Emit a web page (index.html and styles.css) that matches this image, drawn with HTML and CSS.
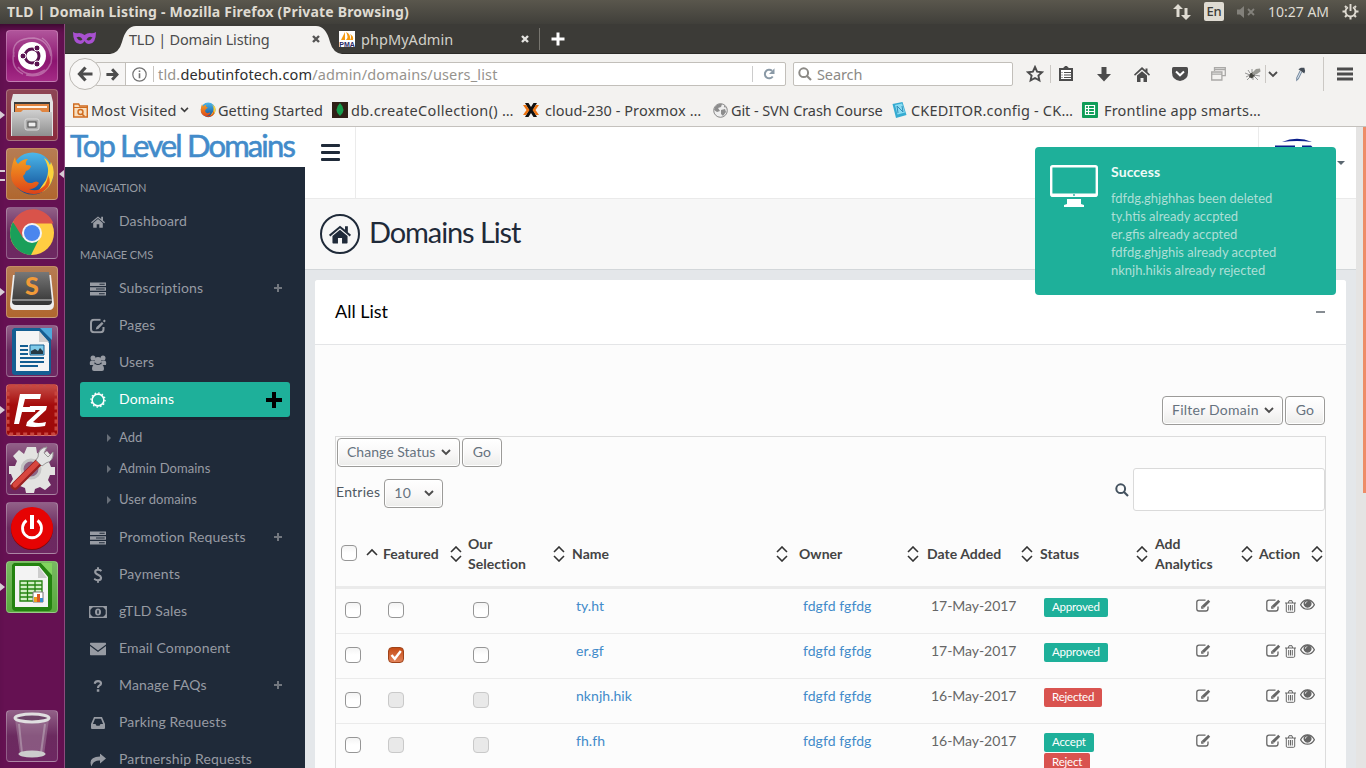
FILE: index.html
```html
<!DOCTYPE html>
<html lang="en">
<head>
<meta charset="utf-8">
<title>TLD | Domain Listing</title>
<link rel="stylesheet" href="styles.css">
</head>
<body>
<svg class="defs" width="0" height="0">
  <defs>
    <linearGradient id="g-steel" x1="0" y1="0" x2="0" y2="1"><stop offset="0" stop-color="#d0d0d0"/><stop offset="1" stop-color="#8f8f8f"/></linearGradient>
    <linearGradient id="g-orange" x1="0" y1="0" x2="0" y2="1"><stop offset="0" stop-color="#f4a021"/><stop offset="1" stop-color="#dd4318"/></linearGradient>
    <linearGradient id="g-blue" x1="0" y1="0" x2="0" y2="1"><stop offset="0" stop-color="#4db8ea"/><stop offset="1" stop-color="#0e4a94"/></linearGradient>
    <linearGradient id="g-key" x1="0" y1="0" x2="0" y2="1"><stop offset="0" stop-color="#777"/><stop offset="1" stop-color="#333"/></linearGradient>
    <symbol id="i-home" viewBox="0 0 14 12"><path d="M7 .4 0 6.200l.8 1L7 2.100l6.200 5.100.8-1-2-1.700V.8H10.200v2.100z"/><path d="M7 3 2.200 7v4.300q0 .5.500.5H5.700V8.300h2.600v3.500h3q.5 0 .5-.5V7z"/></symbol>
    <symbol id="i-server" viewBox="0 0 16 14"><path fill-rule="evenodd" d="M0 .5h16V4H0zM9.500 1.700v1h5.200v-1zM0 5.200h16v3.600H0zM6 6.500v1h8.700v-1zM0 10h16v3.600H0zM9 11.300v1h5.700v-1z"/></symbol>
    <symbol id="i-edit" viewBox="0 0 15 13"><path d="M9.500 1.100H3Q.8 1.100.8 3.300v6.500Q.8 12 3 12h6.800q2.200 0 2.200-2.200V7.600" fill="none" stroke="currentColor" stroke-width="1.300"/><path d="M12.300.8l1.900 1.900-7 7H5.100V7.500z"/><path d="M6.300 7.600 7.500 8.800" stroke="#fff" stroke-width=".6"/></symbol>
    <symbol id="i-editb" viewBox="0 0 16 15"><path d="M10.500 1.300H4Q1 1.300 1 4.300v6.500q0 3 3 3h6.500q3 0 3-3V8.500" fill="none" stroke="currentColor" stroke-width="2"/><path d="M11.900 3.500l1.600 1.500-5.200 5.400-2.600.7.800-2.600zM12.800 2.500 14.500.9l1.300 1.500-1.500 1.500z"/></symbol>
    <symbol id="i-trash" viewBox="0 0 11 13"><path d="M0 3h11M3.400 3 4 .7h3L7.600 3M1.300 3v8.200q0 1.100 1 1.100h6.400q1 0 1-1.100V3M3.700 5v5.500M5.500 5v5.500M7.300 5v5.500" fill="none" stroke="currentColor"/></symbol>
    <symbol id="i-eye" viewBox="0 0 15 11"><path d="M.6 5.700Q3 .8 7.500.8t6.900 4.900Q12 10.200 7.500 10.200T.6 5.700z" fill="none" stroke="currentColor" stroke-width="1.300"/><path fill-rule="evenodd" d="M7.500.8a4 4 0 1 0 .1 0zM7.300 2.200v.9Q5.700 3.200 5.600 4.800H4.800Q5 2.400 7.300 2.200z"/></symbol>
    <symbol id="i-sort" viewBox="0 0 12 16"><path d="M1 6l5-5 5 5M1 10l5 5 5-5" fill="none" stroke="currentColor" stroke-width="1.600"/></symbol>
    <symbol id="i-asc" viewBox="0 0 12 16"><path d="M1 9l5-5 5 5" fill="none" stroke="currentColor" stroke-width="1.600"/></symbol>
    <symbol id="i-chev" viewBox="0 0 10 7"><path d="M1 1l4 4 4-4" fill="none" stroke="currentColor" stroke-width="1.900"/></symbol>
    <symbol id="i-search" viewBox="0 0 14 14"><circle cx="5.700" cy="5.700" r="4.400" fill="none" stroke="currentColor" stroke-width="2"/><path d="M9 9l4 4" stroke="currentColor" stroke-width="2.200"/></symbol>
    <symbol id="i-fox" viewBox="0 0 46 46"><circle cx="23.500" cy="22.500" r="21" fill="url(#g-blue)"/><path d="M35 7q7 11 2 22l-9 13q9-1 13-8 7-12 1-23l-1 3q-2-5-6-7z" fill="#fbd33c"/><path d="M6 6q0 4 3 7 4-5 10-5-3 3-2 6 4 0 5 1-1 4-5 5-1 4-3 5 2 8 9 7 5-3 7 0-3 6-10 6 9 4 16-4 3-6 3-10 5 9-3 15-7 6-18 3Q1 36 2 22 3 12 6 6z" fill="url(#g-orange)"/></symbol>
  </defs>
</svg>

<header class="panel">
  <span class="panel-title">TLD | Domain Listing - Mozilla Firefox (Private Browsing)</span>
  <div class="tray">
    <svg width="18" height="16" viewBox="0 0 18 16"><path d="M5 0l5 5H6.500v8h-3V5H0zM13 16l5-5h-3.500V4h-3v7H8z" fill="#dfdbd2"/></svg>
    <span class="lang">En</span>
    <svg class="mute" width="18" height="12" viewBox="0 0 18 12"><path d="M0 3.500h3L7 0v12L3 8.500H0z" fill="#83817b"/><path d="M11 3l6 6M17 3l-6 6" stroke="#83817b" stroke-width="1.800"/></svg>
    <span class="clock">10:27 AM</span>
    <svg width="17" height="17" viewBox="0 0 17 17" fill="none" stroke="#dfdbd2"><path d="M6 4.200a5 5 0 1 0 5 0" fill="none" stroke-width="1.900"/><path d="M8.500 1v7" stroke-width="1.900"/><path d="M4.500 4.500 3 3M12.500 4.500 14 3M3.500 8.500H.5M13.500 8.500h3M5 12 3 14M12 12l2 2M8.500 13.500v3" stroke-width="2"/></svg>
  </div>
</header>

<div class="desktop">
  <nav class="launcher">
    <div class="tile t-dash"><svg viewBox="0 0 52 52"><path d="M8 27Q4 8 28 8q14 2 17 18M17 44Q4 38 8 22M20 45q18 4 25-12Q48 16 36 8M12 37q11 13 27 3" fill="none" stroke="#fff" stroke-opacity=".3" stroke-width="1.500"/><circle cx="26" cy="26" r="14" fill="#fff"/><circle cx="26" cy="26" r="7" fill="none" stroke="#5a1250" stroke-width="3"/><circle cx="17" cy="26" r="3" fill="#5a1250" stroke="#fff"/><circle cx="31" cy="18" r="3" fill="#5a1250" stroke="#fff"/><circle cx="31" cy="34" r="3" fill="#5a1250" stroke="#fff"/></svg></div>
    <div class="tile t-red run"><svg viewBox="0 0 52 52"><path d="M7 5h38l2 8v34H5V13z" fill="#e3e3e3"/><path d="M8 13h36v14H8z" fill="#3c3c3c"/><path d="M9 15h34v13H9z" fill="#e08540"/><path d="M11 17h30v2H11z" fill="#fff2e5"/><path d="M6 23h9l2-2h17l2 2h10v24H6z" fill="url(#g-steel)"/><rect x="19" y="30" width="14" height="11" rx="2" fill="#aaa" stroke="#ddd"/><rect x="22" y="33" width="8" height="5" fill="#eee" stroke="#444"/></svg></div>
    <div class="tile t-orange run multi focus"><svg viewBox="0 0 52 52"><use href="#i-fox" x="3" y="3" width="46" height="46"/></svg></div>
    <div class="tile t-clear"><svg viewBox="0 0 52 52"><circle cx="26" cy="26" r="22" fill="#ffcd42"/><path d="M7 15a22 22 0 0 0 18 33l9-18-14-1z" fill="#1a9f5a"/><path d="M7 15 17 31l9-14.500h21.500A22 22 0 0 0 7 15z" fill="#d9534a"/><circle cx="26" cy="26" r="10" fill="#f4f4f4"/><circle cx="26" cy="26" r="8" fill="#4a86ee"/></svg></div>
    <div class="tile t-orange run"><svg viewBox="0 0 52 52"><path d="M7 9 4 38q0 6 5 6h34q5 0 5-6L45 9z" fill="#eee"/><path d="M9 6h34l3 29q0 4-4 4H10q-4 0-4-4z" fill="url(#g-key)"/><path d="M6 33h40v2H6z" fill="#888"/><text x="26" y="29" class="sub">S</text></svg></div>
    <div class="tile t-clear"><svg viewBox="0 0 52 52"><path d="M8 3h27l10 11v33q0 3-3 3H9q-3 0-3-3V5z" fill="#145e92"/><path d="M34 3h12v12z" fill="#4fa9db"/><path d="M10 6h23l10 12v28H10z" fill="#f5f5f5"/><path d="M33 6v11h10z" fill="#cfcfcf"/><path d="M14 21h8M14 25h8M14 29h8M14 33h24M14 37h24M14 41h18" stroke="#145e92" stroke-width="1.800"/><path d="M24 20h14v10H24z" fill="#81cbe9" stroke="#145e92"/><path d="M25 29v-3l4-2 3 2 2-3 3 3v3z" fill="#263944"/></svg></div>
    <div class="tile t-fz run"><svg viewBox="0 0 52 52"><rect x="2" y="2" width="48" height="48" rx="3" fill="none" stroke="#c8453f" stroke-width="3" stroke-dasharray="4 3"/><path d="M14 10h21l-1 5H19l-2 8h13l-1 5H16l-3 12H8zM24 22h17l-1 4-13 12q5 2 13 0l-1 4q-11 2-19 0l1-4 13-12h-11z" fill="#fff"/></svg></div>
    <div class="tile t-clear"><svg viewBox="0 0 52 52"><path d="M21 4h9l1 6 5 2 5-4 5 6-3 5 2 5h4v8h-5l-2 5 3 5-6 5-5-3-5 2-1 4h-8l-1-5-5-2-5 3-5-5 3-5-2-5H3v-8h6l2-5-4-5 6-6 5 4z" fill="#e3e3e1"/><circle cx="25" cy="26" r="9" fill="#8b6585" stroke="#c4c4c4" stroke-width="3"/><path d="M9 43 33 19" stroke="#982020" stroke-width="8" stroke-linecap="round"/><path d="m9 42 23-23" stroke="#d8473f" stroke-width="5" stroke-linecap="round"/><path d="M32 14q0-9 9-10l-3 6 4 4 5-5q1 9-7 11l-4 3-6-6z" fill="#e4e4e4" stroke="#999"/></svg></div>
    <div class="tile t-clear"><svg viewBox="0 0 52 52"><circle cx="26" cy="27" r="21" fill="#850707"/><circle cx="26" cy="26" r="21" fill="#e60303"/><path d="M20.500 18.500a9.500 9.500 0 1 0 11 0" fill="none" stroke="#fff" stroke-width="2.800"/><path d="M26 13v14" stroke="#fff" stroke-width="4"/></svg></div>
    <div class="tile t-green run"><svg viewBox="0 0 52 52"><path d="M8 2h27l11 12v32q0 4-4 4H10q-4 0-4-4V4z" fill="#23820f"/><path d="M35 2h11v12z" fill="#82d45f"/><path d="M9 5h24l9 11v30H9z" fill="#f3f3f3"/><path d="M32 5v12h9z" fill="#ccc"/><path d="M14 20h22v20H14zM14 24h22M14 28h22M14 32h22M14 36h22M21.500 20v20M29 20v20" fill="#d2f0c5" stroke="#23820f" stroke-width="1.300"/><path d="M27 31h10v10H27z" fill="#fff" stroke="#777"/><path d="M28 36h3v5h-3z" fill="#eaa320"/><path d="M31 33h3v8h-3z" fill="#dc5726"/><path d="M34 37h3v4h-3z" fill="#388ece"/></svg></div>
    <div class="tile t-clear bin"><svg viewBox="0 0 52 52"><path d="M9 9h34l-5 36q-12 4-24 0z" fill="#b59cb0" fill-opacity=".4"/><path d="M13 14l3 29M39 14l-4 29" stroke="#ddd" stroke-opacity=".35" stroke-width="2"/><ellipse cx="26" cy="44" rx="13.500" ry="3.500" fill="#ccc"/><ellipse cx="26" cy="8" rx="17" ry="4" fill="#6d4468" stroke="#e0dfe0" stroke-width="3"/></svg></div>
  </nav>

  <main class="browser">
    <div class="tabstrip">
      <svg class="mask" width="23" height="15" viewBox="0 0 23 15"><path fill-rule="evenodd" d="M0 1q3 2 6 1 3 0 5.500 2Q14 2 17 2q3 1 6-1 0 12-7 12-3 0-4.500-3Q10 13 7 13 0 13 0 1zM3.500 6.500q3 4.500 6 2-2-4-6-2zM19.500 6.500q-3 4.500-6 2 2-4 6-2z" fill="#a850d0"/></svg>
      <div class="tab">
        <svg class="tab-shape" width="232" height="28" viewBox="0 0 232 28"><path d="M0 28Q9 27 12 16 16 0 26 0H206q10 0 14 16 3 11 12 12z" fill="#f3f2f0"/></svg>
        <span class="tab-text">TLD | Domain Listing</span>
        <svg class="x" width="8" height="8" viewBox="0 0 8 8"><path d="M1 1l6 6M7 1 1 7" stroke="#555" stroke-width="2.400"/></svg>
      </div>
      <svg class="pma" width="16" height="16" viewBox="0 0 16 16"><path d="M0 0h16v16H0z" fill="#fff"/><path d="M2 9 6 1v8zM7 9q3-3 0-8 5 2 4 8zM11 9q2-3 0-6 4 2 3 6z" fill="#f49a10"/><text x="8" y="15.800" class="pma-t">PMA</text></svg>
      <span class="tab-text dim">phpMyAdmin</span>
      <svg class="x2" width="8" height="8" viewBox="0 0 8 8"><path d="M1 1l6 6M7 1 1 7" stroke="#e4e3df" stroke-width="2.400"/></svg>
      <i class="tab-sep"></i>
      <svg class="plus" width="14" height="14" viewBox="0 0 14 14"><path d="M7 .5v13M.5 7h13" stroke="#fff" stroke-width="3"/></svg>
    </div>

    <div class="navbar">
      <div class="back"><svg width="16" height="16" viewBox="0 0 16 16"><path d="M8.500 1.500 2.500 8l6 6.500M3 8h12.500" fill="none" stroke="#4c4c4c" stroke-width="3.200"/></svg></div>
      <div class="urlbar">
        <div class="fwd"><svg width="13" height="13" viewBox="0 0 16 16"><path d="M7.500 1.500l6 6.500-6 6.500M13 8H.5" fill="none" stroke="#4c4c4c" stroke-width="3.600"/></svg></div>
        <svg class="info" width="15" height="15" viewBox="0 0 15 15"><circle cx="7.500" cy="7.500" r="6.700" fill="none" stroke="#737373" stroke-width="1.200"/><path d="M7.500 6.300v5M7.500 3.500v1.600" stroke="#737373" stroke-width="1.600"/></svg>
        <i class="usep"></i>
        <span class="url">tld.<b>debutinfotech.com</b>/admin/domains/users_list</span>
        <div class="reload"><svg width="12" height="12" viewBox="0 0 12 12"><path d="M9 2.800A4.300 4.300 0 1 0 9.700 8.500" fill="none" stroke="#8a99a6" stroke-width="2"/><path d="M11.500.3V6H6z" fill="#8a99a6"/></svg></div>
      </div>
      <div class="searchbar"><svg width="14" height="14"><use href="#i-search"/></svg><span>Search</span></div>
      <div class="tools">
        <svg style="left:13px" width="18" height="18" viewBox="0 0 18 18"><path d="M9 2l2.100 4.600 5 .6-3.700 3.300 1 4.900L9 13l-4.400 2.400 1-4.900L1.900 7.200l5-.6z" fill="none" stroke="#4c4c4c" stroke-width="1.900"/></svg>
        <i style="left:37px"></i>
        <svg style="left:46px" width="14" height="16" viewBox="0 0 14 16"><path d="M1 3h12v11H1z" fill="#fff" stroke="#4c4c4c" stroke-width="2"/><path d="M4 3 7 0l3 3zM5 6.500h7M5 9h7M5 11.500h7" fill="#4c4c4c" stroke="#4c4c4c" stroke-width="1.200"/><path d="M2.500 6.500h1M2.500 9h1M2.500 11.500h1" stroke="#4c4c4c"/></svg>
        <svg style="left:84px" width="14" height="15" viewBox="0 0 14 15"><path d="M4.500 0h5v7H14l-7 7.500L0 7h4.500z" fill="#4c4c4c"/></svg>
        <svg style="left:121px" width="16" height="15" viewBox="0 0 16 15"><path d="M8 0 0 7.500l1 1.200L8 2.600l7 6.100 1-1.200-2.500-2.400V1.500h-2v1.800zM3 8.500l5-4.300 5 4.300V15H9.500v-4h-3v4H3z" fill="#4c4c4c"/></svg>
        <svg style="left:159px" width="16" height="14" viewBox="0 0 16 14"><path d="M1.500 0h13Q16 0 16 1.500v4Q16 13 8 14 0 13 0 5.500v-4Q0 0 1.500 0z" fill="#4c4c4c"/><path d="M4 4.500 8 8.300l4-3.800" fill="none" stroke="#fff" stroke-width="2"/></svg>
        <svg style="left:198px" width="15" height="14" viewBox="0 0 15 14"><path d="M3.500 4V.7h10.800v8H11M.7 5h10.200v8H.7zM.7 7.200h10.200M3.500 2.500h10.500" fill="none" stroke="#aaa9a7" stroke-width="1.300"/></svg>
        <svg style="left:232px" width="16" height="13" viewBox="0 0 16 13"><path d="M4 9 5 5.500 8 4l2 3-3 3.500z" fill="#45453f"/><path d="M7 5 11 1l4-.5.500 3L12 6 8 7z" fill="#9a9a94"/><path d="M0 5l5 2-4 2M5 9l-3 3M8 9v3M9 8l4 4M9 7l6 1M5 5 3 2M7 4 7 1" stroke="#555" stroke-width=".6" fill="none"/></svg>
        <i style="left:252px"></i>
        <svg style="left:255px" width="10" height="7"><use href="#i-chev"/></svg>
        <svg style="left:282px" width="11" height="16" viewBox="0 0 13 17"><path d="M8 6 4 14l-2 2v-3l4-8" fill="#dde8f2" stroke="#788ba0" stroke-width="1.200"/><path d="M4 3l7 5 1-3-1-4-4 0z" fill="#444d57"/></svg>
        <i class="tall" style="left:310px"></i>
        <svg style="left:324px" width="16" height="14" viewBox="0 0 16 14"><path d="M0 2h16M0 7h16M0 12h16" stroke="#4c4c4c" stroke-width="2.800"/></svg>
      </div>
    </div>

    <div class="bookmarks">
      <svg style="left:8px" width="15" height="15" viewBox="0 0 15 15"><path d="M.7 1h5l1 2h7.600v11H.7z" fill="#f8dfbf" stroke="#cf6b1f" stroke-width="1.400"/><path d="M1 4.500h13" stroke="#cf6b1f"/><circle cx="7.500" cy="9" r="2.500" fill="none" stroke="#cf6b1f" stroke-width="1.400"/><path d="m9 11 2.500 2.500" stroke="#cf6b1f" stroke-width="1.600"/></svg>
      <span class="wide" style="left:26px">Most Visited</span>
      <svg style="left:115px" width="9" height="6"><use href="#i-chev"/></svg>
      <svg style="left:135px" width="16" height="16"><use href="#i-fox"/></svg>
      <span class="mid" style="left:153px">Getting Started</span>
      <svg style="left:267px" width="16" height="16" viewBox="0 0 16 16"><path d="M0 0h16v16H0z" fill="#301f16"/><path d="M8 1q7 7 0 13Q1 8 8 1z" fill="#169b4b"/></svg>
      <span class="wider" style="left:286px">db.createCollection() …</span>
      <svg style="left:458px" width="16" height="14" viewBox="0 0 16 14"><path d="M2 0h3.500L8 4l2.500-4H14l-4 7 4 7h-3.500L8 10l-2.500 4H2l4-7z" fill="#111"/><path d="M0 2h3l3.500 5L3 12H0l3.500-5zM16 2h-3L9.500 7l3.500 5h3l-3.500-5z" fill="#ee7411"/></svg>
      <span class="wide" style="left:480px"><span class="tight">cloud-230 - </span>Proxmox …</span>
      <svg style="left:648px" width="15" height="15" viewBox="0 0 15 15"><circle cx="7.500" cy="7.500" r="6.800" fill="#eee" stroke="#888"/><path d="M2 4q3-4 7-3L8 4 5 5l2 3-3 1-3-2zM8 7l4-1 1 3-3 4-2-2zM11 2l2 3-2-1z" fill="#8d8d8d"/></svg>
      <span style="left:666px">Git - SVN Crash Course</span>
      <svg style="left:827px" width="15" height="16" viewBox="0 0 15 16"><path d="M.5 2 10.500 0l4 13-10.500 3z" fill="#35abd1"/><path d="M3 3l7-1.500 3 9-7.500 2z" fill="#8bdcf2"/><path d="M6 11 5 4l6 6-1-6" stroke="#338eb9" fill="none"/></svg>
      <span class="wide" style="left:846px">CKEDITOR.config - CK…</span>
      <svg style="left:1017px" width="16" height="16" viewBox="0 0 16 16"><rect width="16" height="16" rx="1" fill="#0f9d58"/><path d="M3.500 3.500h9v9h-9zM3.500 6.500h9M3.500 9.500h9M6.500 3.500v9" fill="none" stroke="#fff" stroke-width="1.200"/></svg>
      <span class="wide" style="left:1039px">Frontline app smarts…</span>
    </div>

    <div class="page">
      <aside class="sidebar">
        <div class="brand"><span>Top Level Domains</span></div>
        <div class="menu">
          <h6 class="cap">NAVIGATION</h6>
          <a class="item"><svg width="14" height="12"><use href="#i-home"/></svg><span>Dashboard</span></a>
          <h6 class="cap">MANAGE CMS</h6>
          <a class="item"><svg width="16" height="14"><use href="#i-server"/></svg><span>Subscriptions</span><em></em></a>
          <a class="item"><svg width="16" height="15"><use href="#i-editb"/></svg><span>Pages</span></a>
          <a class="item"><svg width="18" height="16" viewBox="0 0 18 16"><circle cx="4" cy="3" r="2.500"/><circle cx="14" cy="3" r="2.500"/><path d="M1 10q-1-4.500 2-4.500l3 .5q-1 3 0 4zM17 10q1-4.500-2-4.500l-3 .5q1 3 0 4z"/><circle cx="9" cy="5.500" r="3.400"/><path d="M6 9q3 2 6 0 3 1 3 5 0 2-2 2H5q-2 0-2-2 0-4 3-5z"/></svg><span>Users</span></a>
          <a class="item active"><svg width="16" height="16" viewBox="0 0 16 16"><circle cx="8" cy="8" r="5.900" fill="none" stroke="currentColor" stroke-width="1.600"/><circle cx="8" cy="8" r="7.100" fill="none" stroke="currentColor" stroke-width="1.200" stroke-dasharray="1.500 2.217"/></svg><span>Domains</span><em></em></a>
          <div class="subs">
            <a>Add</a><a>Admin Domains</a><a>User domains</a>
          </div>
          <a class="item"><svg width="16" height="14"><use href="#i-server"/></svg><span>Promotion Requests</span><em></em></a>
          <a class="item"><svg width="9" height="16" viewBox="0 0 9 16"><path d="M8 4Q6.500 2.800 4.500 2.800 1.700 2.800 1.700 5q0 1.600 2.800 2.700T7.600 10.700q0 2.500-3.100 2.500-2.200 0-3.900-1.500M4.500.3V3M4.500 13v2.700" fill="none" stroke="currentColor" stroke-width="2.100"/></svg><span>Payments</span></a>
          <a class="item"><svg width="18" height="12" viewBox="0 0 18 12"><path d="M.7.7h16.600v10.600H.7z" fill="none" stroke="currentColor" stroke-width="1.300"/><path d="M1 1h3L1 4zM17 1h-3l3 3zM1 11V8l3 3zM17 11V8l-3 3z"/><path fill-rule="evenodd" d="M9 2.500q3 0 3 3.500T9 9.500 6 6t3-3.500zm-.8 1.700v3.600h1.600V4.200z"/></svg><span>gTLD Sales</span></a>
          <a class="item"><svg width="16" height="13" viewBox="0 0 16 13"><path d="M1 0h14q1 0 1 1v1L8 8 0 2V1q0-1 1-1zM0 3.500 8 9.500l8-6V12q0 1-1 1H1q-1 0-1-1z"/></svg><span>Email Component</span></a>
          <a class="item"><svg width="9" height="12" viewBox="0 0 9 12"><path d="M1 3.700Q1.800 1.100 4.500 1.100 7.500 1.100 7.500 3.500q0 1.200-1.700 2.100Q4.500 6.300 4.500 8" fill="none" stroke="currentColor" stroke-width="2.200"/><path d="M3.300 9.300h2.500v2.400H3.300z"/></svg><span>Manage FAQs</span><em></em></a>
          <a class="item"><svg width="14" height="12" viewBox="0 0 14 12"><path fill-rule="evenodd" d="M3 0h8l3 7v4q0 1-1 1H1q-1 0-1-1V7zM4 1.700 1.900 7h2.600l1 1.700h3l1-1.700h2.600L10 1.700z"/></svg><span>Parking Requests</span></a>
          <a class="item"><svg width="16" height="13" viewBox="0 0 16 13"><path d="M10 0l6 5-6 5V7Q3 6.500 1.500 13-2.500 3.500 10 3z"/></svg><span>Partnership Requests</span></a>
        </div>
      </aside>

      <section class="content">
        <div class="topbar">
          <div class="burger"><i></i><i></i><i></i></div>
          <div class="user"><svg class="avatar" width="60" height="30" viewBox="0 0 60 30"><path d="M13 5q15-6.500 30 0-15-2-30 0z" fill="#0b1f8b"/><path d="M6 8.500h20v3H6zM33 8.500h9l3 3H33z" fill="#0b1f8b"/></svg><i class="caret"></i></div>
        </div>
        <div class="heading">
          <div class="ring"><svg width="22" height="19"><use href="#i-home"/></svg></div>
          <h1>Domains List</h1>
        </div>
        <div class="card">
          <div class="card-head"><h2>All List</h2><i></i></div>
          <div class="card-body">
            <div class="filter"><button class="btn sel">Filter Domain <svg width="10" height="7"><use href="#i-chev"/></svg></button><button class="btn go">Go</button></div>
            <div class="box">
              <div class="bulk"><button class="btn sel">Change Status <svg width="10" height="7"><use href="#i-chev"/></svg></button><button class="btn go">Go</button></div>
              <div class="tabletools">
                <div class="entries"><span>Entries</span> <button class="btn sel num">10 <svg width="10" height="7"><use href="#i-chev"/></svg></button></div>
                <div class="find"><svg width="14" height="14"><use href="#i-search"/></svg><span class="field"></span></div>
              </div>
              <div class="row head">
                <div class="c1"><span class="cb"></span><svg class="sort"><use href="#i-asc"/></svg></div>
                <div class="c2">Featured<svg class="sort"><use href="#i-sort"/></svg></div>
                <div class="c3">Our<br>Selection<svg class="sort"><use href="#i-sort"/></svg></div>
                <div class="c4">Name<svg class="sort"><use href="#i-sort"/></svg></div>
                <div class="c5">Owner<svg class="sort"><use href="#i-sort"/></svg></div>
                <div class="c6">Date Added<svg class="sort"><use href="#i-sort"/></svg></div>
                <div class="c7">Status<svg class="sort"><use href="#i-sort"/></svg></div>
                <div class="c8">Add<br>Analytics<svg class="sort"><use href="#i-sort"/></svg></div>
                <div class="c9">Action<svg class="sort"><use href="#i-sort"/></svg></div>
              </div>
              <div class="row">
                <div class="c1"><span class="cb"></span></div><div class="c2"><span class="cb"></span></div><div class="c3"><span class="cb"></span></div>
                <div class="c4"><a>ty.ht</a></div><div class="c5"><a>fdgfd fgfdg</a></div><div class="c6">17-May-2017</div>
                <div class="c7"><span class="label ok">Approved</span></div>
                <div class="c8"><svg width="15" height="13"><use href="#i-edit"/></svg></div>
                <div class="c9"><svg width="15" height="13"><use href="#i-edit"/></svg><svg class="tr" width="11" height="13"><use href="#i-trash"/></svg><svg width="15" height="11"><use href="#i-eye"/></svg></div>
              </div>
              <div class="row">
                <div class="c1"><span class="cb"></span></div><div class="c2"><span class="cb on"><svg width="14" height="14" viewBox="0 0 14 14"><path d="M2.500 7l3.300 3.800L11.800 3" fill="none" stroke="#fff" stroke-width="2.400"/></svg></span></div><div class="c3"><span class="cb"></span></div>
                <div class="c4"><a>er.gf</a></div><div class="c5"><a>fdgfd fgfdg</a></div><div class="c6">17-May-2017</div>
                <div class="c7"><span class="label ok">Approved</span></div>
                <div class="c8"><svg width="15" height="13"><use href="#i-edit"/></svg></div>
                <div class="c9"><svg width="15" height="13"><use href="#i-edit"/></svg><svg class="tr" width="11" height="13"><use href="#i-trash"/></svg><svg width="15" height="11"><use href="#i-eye"/></svg></div>
              </div>
              <div class="row">
                <div class="c1"><span class="cb"></span></div><div class="c2"><span class="cb off"></span></div><div class="c3"><span class="cb off"></span></div>
                <div class="c4"><a>nknjh.hik</a></div><div class="c5"><a>fdgfd fgfdg</a></div><div class="c6">16-May-2017</div>
                <div class="c7"><span class="label no">Rejected</span></div>
                <div class="c8"><svg width="15" height="13"><use href="#i-edit"/></svg></div>
                <div class="c9"><svg width="15" height="13"><use href="#i-edit"/></svg><svg class="tr" width="11" height="13"><use href="#i-trash"/></svg><svg width="15" height="11"><use href="#i-eye"/></svg></div>
              </div>
              <div class="row">
                <div class="c1"><span class="cb"></span></div><div class="c2"><span class="cb off"></span></div><div class="c3"><span class="cb off"></span></div>
                <div class="c4"><a>fh.fh</a></div><div class="c5"><a>fdgfd fgfdg</a></div><div class="c6">16-May-2017</div>
                <div class="c7"><span class="label ok">Accept</span><span class="label no">Reject</span></div>
                <div class="c8"><svg width="15" height="13"><use href="#i-edit"/></svg></div>
                <div class="c9"><svg width="15" height="13"><use href="#i-edit"/></svg><svg class="tr" width="11" height="13"><use href="#i-trash"/></svg><svg width="15" height="11"><use href="#i-eye"/></svg></div>
              </div>
            </div>
          </div>
        </div>
      </section>
      <div class="scroll"><i></i></div>
      <div class="toast">
        <svg width="48" height="42" viewBox="0 0 48 42"><rect x="1.200" y="1.200" width="45.600" height="29.600" rx="1.500" fill="none" stroke="#fff" stroke-width="2.400"/><path d="M1 28.500h46v3H1zM17 34h14v5l3 1v2H14v-2l3-1z" fill="#fff"/><circle cx="24" cy="30" r=".9" fill="#1eb09a"/></svg>
        <div><strong>Success</strong><p>fdfdg.ghjghhas been deleted<br>ty.htis already accpted<br>er.gfis already accpted<br>fdfdg.ghjghis already accpted<br>nknjh.hikis already rejected</p></div>
      </div>
    </div>
  </main>
</div>
</body>
</html>
```
FILE: styles.css
```css
* { box-sizing: border-box; }
body { margin: 0; width: 1366px; height: 768px; overflow: hidden; display: flex; flex-direction: column; font-family: Lato, sans-serif; font-size: 14px; color: #5b6770; }
h1, h2, h6, p { margin: 0; font-weight: 400; }
svg { display: block; flex: none; fill: currentColor; }
.defs { position: absolute; }

.panel { height: 24px; flex: none; display: flex; align-items: center; padding: 0 7px 1px; background: linear-gradient(#5a574d, #403f3a); font-family: "Noto Sans", sans-serif; color: #dfdbd2; }
.panel svg { fill: none; }
.panel-title { font-size: 14px; font-weight: 700; letter-spacing: .19px; white-space: nowrap; }
.tray { margin-left: auto; display: flex; align-items: center; }
.lang { margin-left: 13px; width: 20px; height: 19px; line-height: 19px; border-radius: 2px; background: #dfdbd2; color: #3d3c37; font-size: 13px; font-weight: 500; text-align: center; letter-spacing: -.3px; }
.mute { margin-left: 13px; }
.clock { margin-left: 13px; width: 62px; font-size: 14px; letter-spacing: 0; white-space: nowrap; margin-right: 12px; }

.desktop { flex: 1; min-height: 0; display: flex; }
.launcher { width: 65px; flex: none; display: flex; flex-direction: column; gap: 7px; padding: 6px 0 6px 6px; background: #651152; border-right: 1px solid #8d4a7e; box-shadow: inset 0 8px 8px -6px #2d0724; }
.tile { position: relative; width: 52px; height: 52px; flex: none; border-radius: 4px; border: 1px solid rgba(255,255,255,.25); }
.tile svg { width: 52px; height: 52px; margin: -1px; }
.t-dash { background: linear-gradient(#b0559b, #8c1470 60%, #a52b86); }
.t-red { background: linear-gradient(#8d4655, #8a2c3d); }
.t-orange { background: linear-gradient(#b67c53, #b0672f); }
.t-clear { background: linear-gradient(#916087, #6b2a5f 50%, #6e2862); }
.t-fz { background: linear-gradient(#c54d47, #a50c0c 40%, #9b0909); }
.t-green { background: linear-gradient(#78ba61, #58a83d); }
.bin { margin-top: auto; }
.run::before { content: ""; position: absolute; left: -7px; top: 21px; border: 4px solid transparent; border-left: 5px solid #d8cdd5; border-right: 0; }
.multi::before { top: 21px; width: 5px; height: 7px; border: solid #d8cdd5; border-width: 2px 0; }
.focus::after { content: ""; position: absolute; right: -7px; top: 21px; border: 4px solid transparent; border-right: 5px solid #d8cdd5; border-left: 0; }
.sub { font: 900 25px Lato, sans-serif; fill: #f19a38; text-anchor: middle; }

.browser { flex: 1; min-width: 0; display: flex; flex-direction: column; background: #f3f2f0; }
.tabstrip { height: 30px; flex: none; display: flex; align-items: center; background: #3c3b37; border-bottom: 1px solid #2c2b28; padding: 2px 0 0 8px; font-family: "Noto Sans", sans-serif; }
.mask { margin-top: -2px; }
.tab { position: relative; display: flex; align-items: center; width: 232px; height: 28px; margin-left: 14px; padding: 0 22px 2px 19px; }
.tab-shape { position: absolute; left: 0; top: 0; }
.tab-text { position: relative; font-size: 14.500px; color: #4c4c4c; white-space: nowrap; letter-spacing: -.2px; }
.dim { color: #d2d0c9; margin: -2px 0 0 6px; width: 160px; letter-spacing: .05px; }
.x { position: relative; margin-left: auto; }
.x2, .plus { margin-top: -2px; }
.pma { margin: -2px 0 0 -3px; }
.pma-t { font: 700 7px "Liberation Sans", sans-serif; fill: #2a2a66; text-anchor: middle; }
.tab-sep { width: 1px; height: 22px; background: #77756f; margin: -2px 11px 0 10px; }

.navbar { height: 40px; flex: none; display: flex; align-items: center; padding-left: 4px; font-family: "Noto Sans", sans-serif; font-size: 14.500px; }
.back { position: relative; z-index: 1; width: 32px; height: 32px; border: 1px solid #bbb8b3; border-radius: 50%; background: #f8f7f6; display: grid; place-items: center; }
.urlbar { margin-left: -6px; width: 691px; height: 24px; border: 1px solid #c2bfba; border-radius: 2px; background: #fff; display: flex; align-items: center; }
.fwd { width: 30px; height: 22px; background: #f6f5f4; border-right: 1px solid #c2bfba; display: grid; place-items: center; padding-left: 4px; }
.info { margin-left: 6px; }
.usep { width: 1px; height: 16px; background: #c7c4bf; margin: 0 4px 0 6px; }
.url { color: #96938e; white-space: nowrap; letter-spacing: .15px; }
.url b { font-weight: 400; color: #2e2e2e; }
.reload { margin-left: auto; width: 33px; height: 16px; border-left: 1px solid #ccc; display: grid; place-items: center; }
.searchbar { margin-left: 7px; width: 220px; height: 24px; border: 1px solid #c2bfba; border-radius: 2px; background: #fff; display: flex; align-items: center; gap: 5px; padding-left: 4px; color: #8c8a86; letter-spacing: -.1px; }
.tools { position: relative; flex: 1; height: 40px; color: #4c4c4c; }
.tools svg, .tools i { position: absolute; top: 0; bottom: 0; margin: auto 0; }
.tools i { width: 1px; height: 18px; background: #cbc8c4; }
.tools i.tall { height: 34px; }

.bookmarks { position: relative; height: 33px; flex: none; border-bottom: 1px solid #c4c1bd; font-family: "Noto Sans", sans-serif; font-size: 14.500px; letter-spacing: -.1px; color: #3f3f3f; }
.bookmarks > * { position: absolute; top: 0; bottom: 0; margin: auto 0; }
.bookmarks span { line-height: 33px; white-space: nowrap; }
.bookmarks .mid { letter-spacing: .05px; }
.bookmarks .wide { letter-spacing: .2px; }
.bookmarks .wider { letter-spacing: .33px; }
.bookmarks .tight { letter-spacing: 0; }

.page { position: relative; flex: 1; min-height: 0; display: flex; background: #e4e7ea; }
.sidebar { width: 240px; flex: none; background: #1f2a39; overflow: hidden; }
.brand { height: 40px; background: #fff; padding-left: 5px; color: #428bca; font-size: 31px; line-height: 37px; letter-spacing: -1.850px; white-space: nowrap; -webkit-text-stroke: .6px #428bca; }
.menu { padding: 0 15px; color: #979ba3; }
.cap { height: 30px; padding-top: 12px; margin-bottom: 6px; font-size: 11px; line-height: 18px; letter-spacing: -.1px; }
.item { position: relative; display: flex; align-items: center; height: 35px; margin-bottom: 2px; border-radius: 3px; letter-spacing: .15px; }
.item svg { position: absolute; left: 18px; top: 19px; transform: translate(-50%, -50%); }
.item span { margin-left: 39px; font-size: 14px; }
.item em { position: absolute; right: 8px; top: 14px; width: 8px; height: 8px; background: linear-gradient(#72777f 0 0) center/8px 2px no-repeat, linear-gradient(#72777f 0 0) center/2px 8px no-repeat; }
.cap + .item { margin-bottom: 0; }
.cap:not(:first-child) { margin-bottom: 2px; padding-top: 8px; }
.cap:not(:first-child) + .item { margin-bottom: 2px; }
.item.active { margin: 3px 0 2px; padding-bottom: 2px; background: #1eb09a; color: #fff; box-shadow: 0 3px 0 #1a2432; }
.active svg { top: 18px; }
.active em { top: 10px; width: 16px; height: 16px; background: linear-gradient(#000 0 0) center/16px 4px no-repeat, linear-gradient(#000 0 0) center/4px 16px no-repeat; }
.subs { padding: 3px 0 4px; }
.subs a { position: relative; display: block; height: 31px; line-height: 31px; padding-left: 39px; font-size: 13px; letter-spacing: .05px; }
.subs a::before { content: ""; position: absolute; left: 27px; top: 12px; border: 4px solid transparent; border-left-color: #686f79; border-right: 0; }

.content { width: 1051px; flex: none; overflow: hidden; }
.topbar { height: 71px; background: #fff; display: flex; justify-content: space-between; }
.burger { width: 51px; border-right: 1px solid #ebebeb; padding: 17px 0 0 16px; display: flex; flex-direction: column; gap: 4px; }
.burger i { width: 19px; height: 3px; border-radius: 1px; background: #1f2a39; }
.user { position: relative; width: 98px; border-left: 1px solid #ebebeb; }
.avatar { position: absolute; left: 10px; top: 10px; }
.caret { position: absolute; left: 78px; top: 34px; border: 4px solid transparent; border-top-color: #5b6770; border-bottom: 0; }
.heading { height: 72px; background: #f7f7f7; border-top: 1px solid #eaeaea; border-bottom: 1px solid #d3d7da; display: flex; align-items: center; padding-left: 15px; color: #1f2a39; }
.ring { width: 40px; height: 40px; border: 2px solid #1f2a39; border-radius: 50%; display: grid; place-items: center; }
.heading h1 { margin: -5px 0 0 9px; font-size: 29px; letter-spacing: -1.100px; }
.card { margin: 10px 10px 0; height: 560px; background: #fcfcfc; border-radius: 3px 3px 0 0; }
.card-head { height: 65px; background: #fff; border-bottom: 1px solid #e4e5e7; border-radius: 3px 3px 0 0; display: flex; justify-content: space-between; align-items: center; padding: 0 20px; color: #000; }
.card-head h2 { font-size: 18px; letter-spacing: 0; margin-top: -2px; }
.card-head i { width: 9px; height: 2px; background: #868c92; margin-right: 1px; }
.card-body { padding: 51px 20px 0; }
.filter { display: flex; justify-content: flex-end; gap: 2px; padding-right: 1px; }
.btn { height: 29px; border: 1px solid #9c9b99; border-radius: 4px; background: linear-gradient(#fff, #f9f8f8 50%, #ececea); display: flex; align-items: center; justify-content: space-between; padding: 0 8px 2px 9px; font: 14px Lato, sans-serif; letter-spacing: .25px; color: #66727e; box-shadow: inset 0 0 0 1px #fff; }
.btn svg { color: #4c4c4c; margin-top: 2px; }
.filter .sel { width: 121px; }
.btn.go { width: 40px; padding: 0 0 2px; justify-content: center; }
.box { margin-top: 11px; border: 1px solid #dcdcdc; height: 500px; width: 991px; }
.bulk { display: flex; gap: 2px; padding: 1px; }
.bulk .sel { width: 123px; letter-spacing: .02px; }
.tabletools { display: flex; justify-content: space-between; height: 45px; }
.entries { display: flex; align-items: center; gap: 4px; margin-top: 4px; height: 42px; color: #4f5963; letter-spacing: .25px; }
.entries span { margin-top: -3px; }
.entries .num { width: 59px; }
.find { display: flex; align-items: center; gap: 4px; height: 43px; color: #44525f; }
.field { width: 192px; height: 43px; border: 1px solid #dadada; border-radius: 3px; background: #fff; }
.row { display: grid; grid-template-columns: 44px 85px 102px 223px 130px 115px 115px 105px 70px; height: 45px; border-bottom: 1px solid #ebebeb; letter-spacing: .05px; color: #666; line-height: 20px; }
.row > div { position: relative; padding-top: 7px; }
.row a { color: #428bca; }
.row.head { height: 76px; border-bottom: 3px solid #ebebeb; font-weight: 700; color: #444; letter-spacing: .04px; }
.row.head > div { padding-top: 0; display: flex; align-items: center; margin-top: 5px; height: 72px; }
.sort { position: absolute; right: 2px; top: 28px; width: 12px; height: 16px; color: #333; }
.c2 .sort { right: 3px; }
.c5 .sort { right: 1px; }
.head .c1 { padding-left: 5px; }
.head .c2, .head .c3 { padding-left: 3px; }
.head .c4, .head .c7, .head .c8 { padding-left: 5px; }
.head .c5 { padding-left: 9px; }
.head .c6 { padding-left: 7px; }
.head .c9 { padding-left: 4px; }
.row:not(.head) .c1 { padding-left: 9px; }
.row:not(.head) .c2, .row:not(.head) .c3 { padding-left: 8px; }
.row:not(.head) .c4 { padding-left: 9px; }
.row:not(.head) .c5 { padding-left: 13px; }
.row:not(.head) .c6 { padding-left: 11px; letter-spacing: -.05px; }
.row:not(.head) .c7 { padding: 9px 0 0 9px; }
.row:not(.head) .c8 { padding: 10px 0 0 46px; }
.row:not(.head) .c9 { padding: 10px 0 0 11px; display: flex; gap: 4px; }
.c9 .tr { margin-top: 1px; }
.cb { display: block; width: 16px; height: 16px; margin-top: 6px; border: 1px solid #969696; border-radius: 4px; background: linear-gradient(#f4f4f4, #fff 50%); }
.head .cb { margin-top: -2px; }
.cb.off { border-color: #c9c9c9; background: #e9e9e9; }
.cb.on { border-color: #9f4319; background: linear-gradient(#c44a14, #e2835a); }
.label { display: block; width: max-content; height: 19px; margin-bottom: 1px; padding: 0 8px; border-radius: 2px; color: #fff; font-size: 11.500px; line-height: 18px; letter-spacing: -.2px; }
.ok { background: #1eb09a; }
.no { background: #d9534f; }
.scroll { flex: 1; background: #e5e4e3; }
.scroll i { display: block; margin-left: auto; width: 3px; height: 366px; background: #ee8c67; }
.toast { position: absolute; left: 970px; top: 20px; width: 301px; height: 148px; border-radius: 4px; background: #1eb09a; color: #fff; display: flex; gap: 13px; padding: 18px 15px; }
.toast strong { display: block; font-size: 14px; line-height: 14px; letter-spacing: .1px; color: #eefaf7; }
.toast p { margin-top: 10px; font-size: 13px; line-height: 18px; letter-spacing: 0; color: #addfd6; }
```
